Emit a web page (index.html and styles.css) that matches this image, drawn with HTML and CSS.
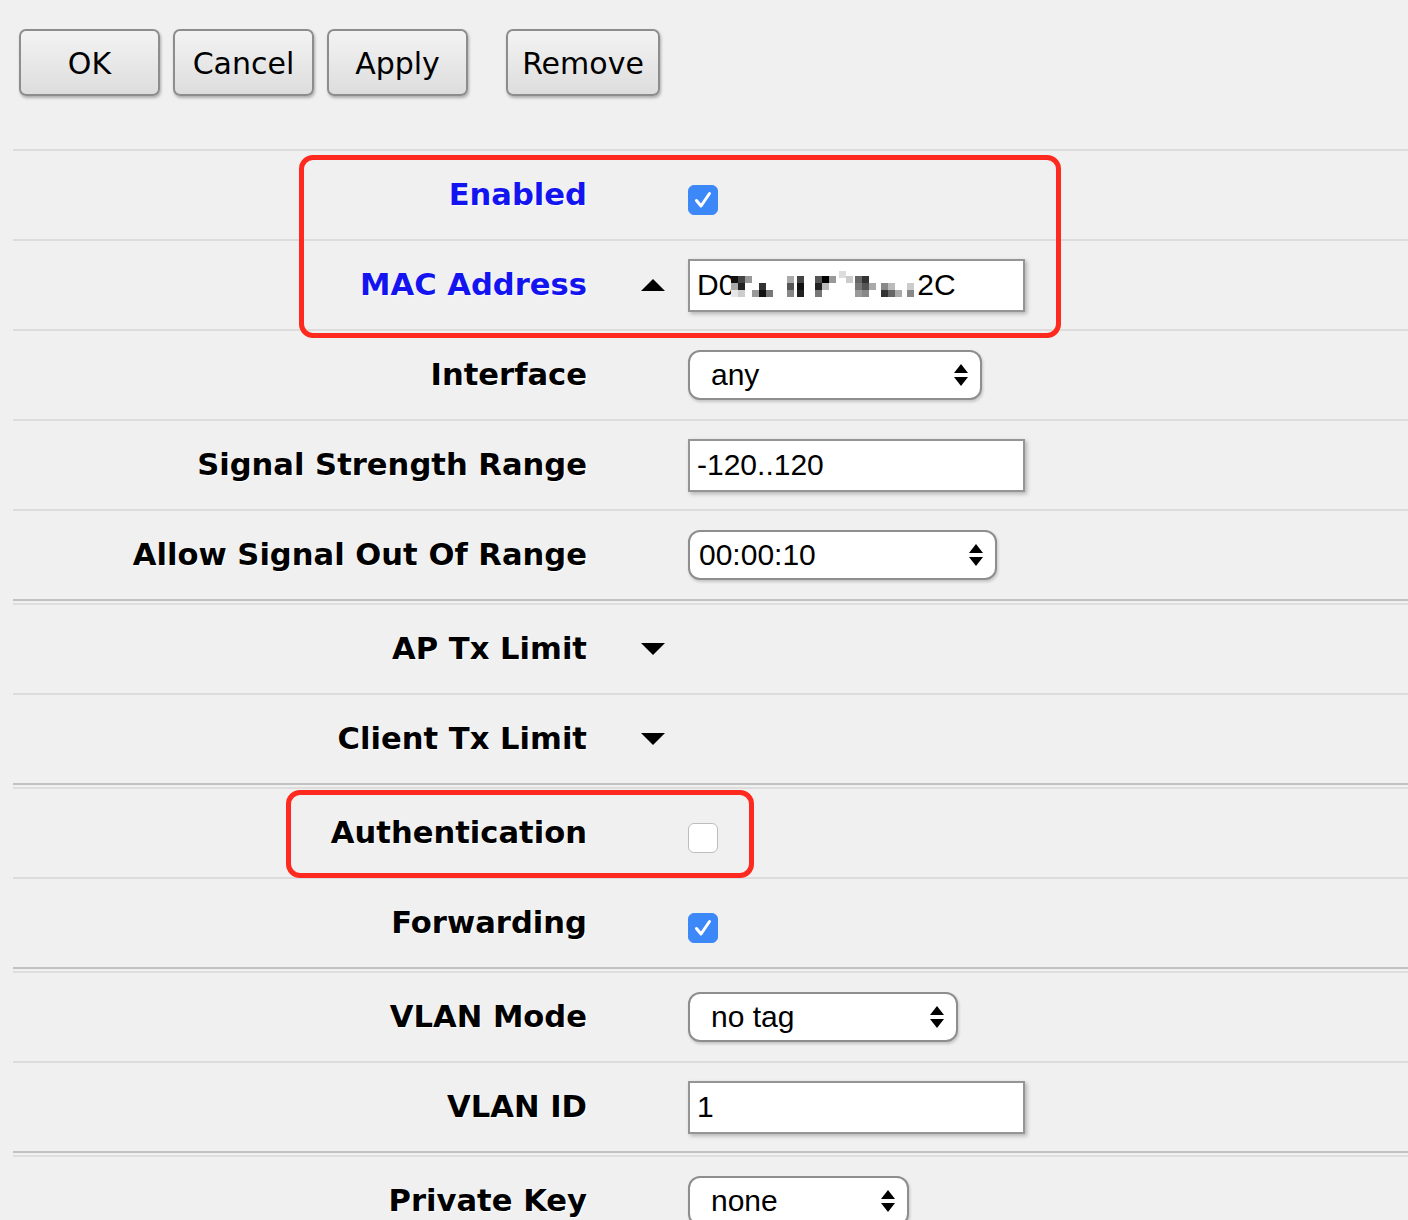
FILE: index.html
```html
<!DOCTYPE html>
<html>
<head>
<meta charset="utf-8">
<title>Access List Entry</title>
<link rel="stylesheet" href="styles.css">
</head>
<body>
<div class="toolbar">
  <button class="btn">OK</button>
  <button class="btn">Cancel</button>
  <button class="btn">Apply</button>
  <button class="btn btn-remove">Remove</button>
</div>

<div class="form">
  <div class="row">
    <div class="label label-blue">Enabled</div>
    <div class="toggle"></div>
    <div class="ctl"><span class="check on"><svg viewBox="0 0 30 30" width="30" height="30"><path d="M8.5 15.5 L13 21 L21.5 8.5" fill="none" stroke="#fff" stroke-width="3" stroke-linecap="round" stroke-linejoin="round"/></svg></span></div>
  </div>
  <div class="row">
    <div class="label label-blue">MAC Address</div>
    <div class="toggle"><svg class="tri" viewBox="0 0 24 12" width="24" height="12"><polygon points="12,0 24,12 0,12" fill="#000"/></svg></div>
    <div class="ctl"><div class="input"><span>D0</span><svg class="mosaic" viewBox="0 0 186 30" width="186" height="30">
      <rect x="0" y="6" width="7" height="7" fill="#111"/><rect x="7" y="6" width="7" height="7" fill="#444"/><rect x="14" y="6" width="7" height="7" fill="#999"/>
      <rect x="7" y="13" width="7" height="7" fill="#222"/><rect x="0" y="13" width="7" height="7" fill="#aaa"/>
      <rect x="7" y="20" width="7" height="7" fill="#ccc"/><rect x="0" y="20" width="7" height="7" fill="#e6e6e6"/>
      <rect x="28" y="13" width="7" height="7" fill="#333"/><rect x="28" y="20" width="7" height="7" fill="#111"/><rect x="35" y="20" width="7" height="7" fill="#777"/><rect x="21" y="20" width="7" height="7" fill="#999"/>
      <rect x="56" y="6" width="7" height="7" fill="#aaa"/><rect x="56" y="13" width="7" height="7" fill="#555"/><rect x="56" y="20" width="7" height="7" fill="#888"/>
      <rect x="66" y="6" width="7" height="7" fill="#444"/><rect x="66" y="13" width="7" height="7" fill="#111"/><rect x="66" y="20" width="7" height="7" fill="#222"/>
      <rect x="84" y="6" width="7" height="7" fill="#555"/><rect x="91" y="6" width="7" height="7" fill="#000"/><rect x="84" y="13" width="7" height="7" fill="#222"/><rect x="98" y="6" width="7" height="7" fill="#999"/><rect x="84" y="20" width="7" height="7" fill="#777"/><rect x="91" y="13" width="7" height="7" fill="#bbb"/>
      <rect x="108" y="1" width="7" height="7" fill="#ddd"/><rect x="115" y="6" width="7" height="7" fill="#ccc"/>
      <rect x="124" y="6" width="7" height="7" fill="#666"/><rect x="131" y="6" width="7" height="7" fill="#333"/><rect x="124" y="13" width="7" height="7" fill="#777"/><rect x="138" y="13" width="7" height="7" fill="#aaa"/><rect x="124" y="20" width="7" height="7" fill="#999"/><rect x="131" y="20" width="7" height="7" fill="#888"/><rect x="131" y="13" width="7" height="7" fill="#555"/>
      <rect x="150" y="13" width="7" height="7" fill="#888"/><rect x="157" y="13" width="7" height="7" fill="#bbb"/><rect x="150" y="20" width="7" height="7" fill="#333"/><rect x="157" y="20" width="7" height="7" fill="#666"/><rect x="164" y="20" width="7" height="7" fill="#aaa"/>
      <rect x="176" y="13" width="7" height="7" fill="#ccc"/><rect x="176" y="20" width="7" height="7" fill="#888"/>
    </svg><span>2C</span></div></div>
  </div>
  <div class="row">
    <div class="label">Interface</div>
    <div class="toggle"></div>
    <div class="ctl"><div class="select sel-iface"><span>any</span><svg class="updown" viewBox="0 0 14 22" width="14" height="22"><polygon points="7,0 14,9 0,9" fill="#000"/><polygon points="0,13 14,13 7,22" fill="#000"/></svg></div></div>
  </div>
  <div class="row">
    <div class="label">Signal Strength Range</div>
    <div class="toggle"></div>
    <div class="ctl"><div class="input"><span>-120..120</span></div></div>
  </div>
  <div class="row">
    <div class="label">Allow Signal Out Of Range</div>
    <div class="toggle"></div>
    <div class="ctl"><div class="select sel-time"><span>00:00:10</span><svg class="updown" viewBox="0 0 14 22" width="14" height="22"><polygon points="7,0 14,9 0,9" fill="#000"/><polygon points="0,13 14,13 7,22" fill="#000"/></svg></div></div>
  </div>
  <div class="row group">
    <div class="label">AP Tx Limit</div>
    <div class="toggle"><svg class="tri" viewBox="0 0 24 12" width="24" height="12"><polygon points="0,0 24,0 12,12" fill="#000"/></svg></div>
    <div class="ctl"></div>
  </div>
  <div class="row">
    <div class="label">Client Tx Limit</div>
    <div class="toggle"><svg class="tri" viewBox="0 0 24 12" width="24" height="12"><polygon points="0,0 24,0 12,12" fill="#000"/></svg></div>
    <div class="ctl"></div>
  </div>
  <div class="row group">
    <div class="label">Authentication</div>
    <div class="toggle"></div>
    <div class="ctl"><span class="check"></span></div>
  </div>
  <div class="row">
    <div class="label">Forwarding</div>
    <div class="toggle"></div>
    <div class="ctl"><span class="check on"><svg viewBox="0 0 30 30" width="30" height="30"><path d="M8.5 15.5 L13 21 L21.5 8.5" fill="none" stroke="#fff" stroke-width="3" stroke-linecap="round" stroke-linejoin="round"/></svg></span></div>
  </div>
  <div class="row group">
    <div class="label">VLAN Mode</div>
    <div class="toggle"></div>
    <div class="ctl"><div class="select sel-vlan"><span>no tag</span><svg class="updown" viewBox="0 0 14 22" width="14" height="22"><polygon points="7,0 14,9 0,9" fill="#000"/><polygon points="0,13 14,13 7,22" fill="#000"/></svg></div></div>
  </div>
  <div class="row">
    <div class="label">VLAN ID</div>
    <div class="toggle"></div>
    <div class="ctl"><div class="input"><span>1</span></div></div>
  </div>
  <div class="row group">
    <div class="label">Private Key</div>
    <div class="toggle"></div>
    <div class="ctl"><div class="select sel-key"><span>none</span><svg class="updown" viewBox="0 0 14 22" width="14" height="22"><polygon points="7,0 14,9 0,9" fill="#000"/><polygon points="0,13 14,13 7,22" fill="#000"/></svg></div></div>
  </div>

  <div class="mark mark-1"></div>
  <div class="mark mark-2"></div>
</div>
</body>
</html>
```

FILE: styles.css
```css
html, body {
  margin: 0;
  padding: 0;
  background: #f0f0f0;
}
body {
  font-family: "DejaVu Sans", Verdana, sans-serif;
  color: #000;
  overflow: hidden;
}

.toolbar {
  height: 149px;
  box-sizing: border-box;
  padding: 29px 0 0 19px;
  display: flex;
  align-items: flex-start;
  gap: 13px;
}
.btn {
  width: 141px;
  height: 67px;
  box-sizing: border-box;
  border: 2px solid #8d8d8d;
  border-radius: 7px;
  background: linear-gradient(#f3f3f3, #dddddd);
  box-shadow: 1px 2px 3px rgba(0, 0, 0, 0.28);
  font-family: "DejaVu Sans", Verdana, sans-serif;
  font-size: 30px;
  color: #000;
  padding: 2px 0 0;
}
.btn-remove {
  width: 154px;
  margin-left: 25px;
}

.form {
  position: relative;
  margin-left: 13px;
}
.row {
  display: grid;
  grid-template-columns: 574px 101px 1fr;
  align-items: center;
  height: 90px;
  box-sizing: border-box;
  border-top: 2px solid #dcdcdc;
}
.row.group {
  height: 94px;
  border-top-color: #c2c2c2;
  box-shadow: inset 0 2px 0 #f0f0f0, inset 0 4px 0 #dedede;
  padding-top: 4px;
}
.label {
  text-align: right;
  font-weight: bold;
  font-size: 30.6px;
  line-height: 36px;
  text-shadow: 1px 1px 1px #fff;
  white-space: nowrap;
}
.label-blue {
  color: #1414f0;
}
.toggle {
  padding-left: 54px;
  display: flex;
  align-items: center;
}
.tri {
  display: block;
}
.ctl {
  display: flex;
  align-items: center;
}

.check {
  width: 30px;
  height: 30px;
  box-sizing: border-box;
  border-radius: 6px;
  background: #fff;
  border: 1px solid #bdbdbd;
  margin-top: 10px;
  display: block;
}
.check.on {
  background: #3d88f8;
  border-color: #3d88f8;
}
.check.on svg {
  display: block;
  margin: -1px;
}

.input {
  width: 337px;
  height: 53px;
  box-sizing: border-box;
  border: 2px solid #959595;
  background: #fff;
  box-shadow: 2px 2px 4px rgba(0, 0, 0, 0.25);
  padding-left: 7px;
  display: flex;
  align-items: center;
  font-family: "Liberation Sans", Arial, sans-serif;
  font-size: 30px;
}
.mosaic {
  display: block;
  margin: 0 0 0 -4px;
}

.select {
  height: 50px;
  box-sizing: border-box;
  border: 2px solid #8e8e8e;
  border-radius: 12px;
  background: #fff;
  box-shadow: 1px 2px 3px rgba(0, 0, 0, 0.18);
  display: flex;
  align-items: center;
  justify-content: space-between;
  padding: 0 12px 0 21px;
  font-family: "Liberation Sans", Arial, sans-serif;
  font-size: 30px;
}
.updown {
  display: block;
}
.sel-iface { width: 294px; }
.sel-time { width: 309px; padding-left: 9px; }
.sel-vlan { width: 270px; }
.sel-key { width: 221px; }

.mark {
  position: absolute;
  box-sizing: border-box;
  border: 5px solid #ff2a1f;
  border-radius: 14px;
  pointer-events: none;
}
.mark-1 {
  left: 286px;
  top: 6px;
  width: 762px;
  height: 183px;
}
.mark-2 {
  left: 273px;
  top: 641px;
  width: 468px;
  height: 88px;
}
```
